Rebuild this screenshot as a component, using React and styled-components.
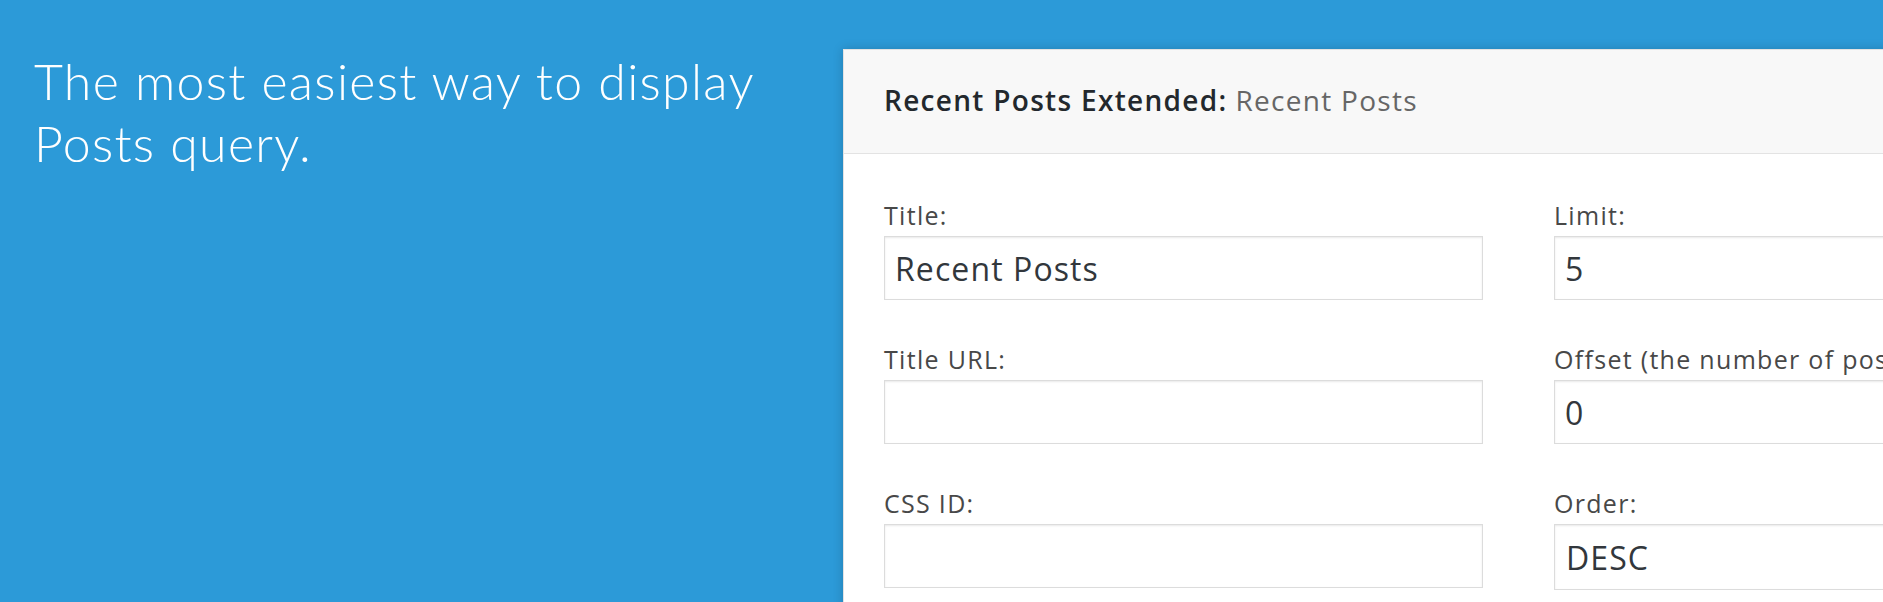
import React from "react";
import styled, { createGlobalStyle } from "styled-components";

const Global = createGlobalStyle`
  html, body {
    margin: 0;
    padding: 0;
    background: #2c9ad8;
    overflow: hidden;
  }
  body {
    width: 1883px;
    height: 602px;
    font-family: "Open Sans", "Liberation Sans", sans-serif;
  }
`;

const Page = styled.div`
  display: flex;
  align-items: flex-start;
  padding-top: 49px;
  width: 1883px;
  height: 602px;
  box-sizing: border-box;
  overflow: hidden;
`;

const Intro = styled.div`
  flex: 0 0 843px;
  box-sizing: border-box;
  padding: 1px 0 0 34px;
`;

const Tagline = styled.h1`
  margin: 0;
  font-family: Lato, "Open Sans", sans-serif;
  font-weight: 300;
  font-size: 50px;
  line-height: 62px;
  letter-spacing: 1.3px;
  color: #ffffff;
`;

const Panel = styled.section`
  flex: 0 0 1349px;
  background: #ffffff;
  border: 1px solid #e2e2e2;
  box-shadow: 0 0 10px rgba(0, 0, 0, 0.18);
  min-height: 600px;
`;

const PanelHeader = styled.header`
  height: 104px;
  box-sizing: border-box;
  display: flex;
  align-items: center;
  padding: 0 40px 4px;
  background: #f8f8f8;
  border-bottom: 1px solid #e3e3e3;
  font-size: 28px;
  letter-spacing: 1.3px;
  color: #23282d;
`;

const Strong = styled.span`
  font-weight: 600;
  margin-right: 8px;
`;

const Muted = styled.span`
  font-weight: 400;
  color: #666;
`;

const Form = styled.div`
  display: grid;
  grid-template-columns: 599px 599px;
  column-gap: 71px;
  row-gap: 42px;
  padding: 44px 40px 0;
`;

const Field = styled.div`
  display: flex;
  flex-direction: column;
  gap: 4px;
`;

const Label = styled.label`
  font-size: 25px;
  line-height: 34px;
  letter-spacing: 1.3px;
  color: #484848;
  white-space: nowrap;
`;

const inputBase = `
  box-sizing: border-box;
  width: 100%;
  height: 64px;
  margin: 0;
  border: 1px solid #dcdcdc;
  box-shadow: inset 0 1px 2px rgba(0, 0, 0, 0.09);
  background: #fff;
  font-family: "Open Sans", "Liberation Sans", sans-serif;
  font-size: 32px;
  letter-spacing: 1.1px;
  color: #32373c;
  outline: none;
  border-radius: 0;
`;

const Input = styled.input`
  ${inputBase}
  padding: 0 10px;
`;

const Select = styled.select`
  ${inputBase}
  padding: 0 11px;
  appearance: none;
  -webkit-appearance: none;
  height: 66px;
`;

const fields = [
  { left: { label: "Title:", value: "Recent Posts" }, right: { label: "Limit:", value: "5" } },
  { left: { label: "Title URL:", value: "" }, right: { label: "Offset (the number of posts to skip):", value: "0" } },
  { left: { label: "CSS ID:", value: "" }, right: { label: "Order:", select: ["DESC", "ASC"] } },
];

function FieldBox({ label, value, select }) {
  return (
    <Field>
      <Label>{label}</Label>
      {select ? (
        <Select defaultValue={select[0]}>
          {select.map((o) => (
            <option key={o} value={o}>{o}</option>
          ))}
        </Select>
      ) : (
        <Input type="text" defaultValue={value} />
      )}
    </Field>
  );
}

export default function App() {
  return (
    <>
      <Global />
      <Page>
        <Intro>
          <Tagline>
            The most easiest way to display
            <br />
            Posts query.
          </Tagline>
        </Intro>
        <Panel>
          <PanelHeader>
            <Strong>Recent Posts Extended:</Strong>
            <Muted>Recent Posts</Muted>
          </PanelHeader>
          <Form>
            {fields.map((row, i) => (
              <React.Fragment key={i}>
                <FieldBox {...row.left} />
                <FieldBox {...row.right} />
              </React.Fragment>
            ))}
          </Form>
        </Panel>
      </Page>
    </>
  );
}
